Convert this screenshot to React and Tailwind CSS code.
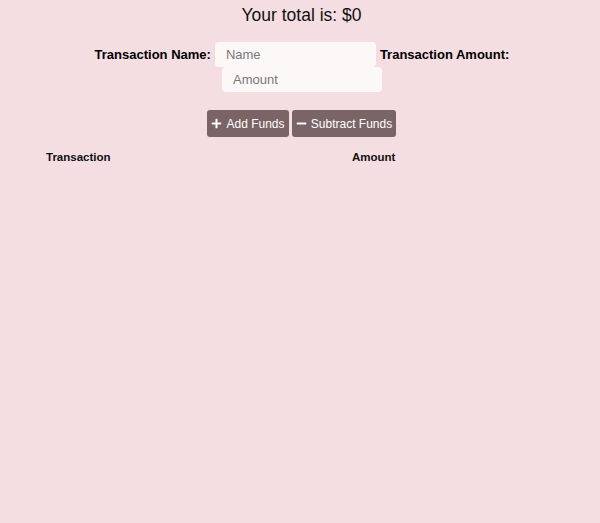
import React from "react";
import { FaPlus, FaMinus } from "react-icons/fa";

const App = () => {
  return (
    <div className="min-h-[523px] w-[600px] bg-[#f4dee1] text-black font-['Liberation_Sans',Arial,sans-serif]">
      <h1 className="pt-[5px] text-center text-[17.5px] leading-[20px] text-[#111]">
        <span className="ml-[3px]">Your total is: $0</span>
      </h1>

      <div className="mt-[17px] ml-[82px] flex w-[440px] flex-wrap items-center justify-center gap-x-[4px]">
        <label className="text-[13px] font-bold">Transaction Name:</label>
        <input
          placeholder="Name"
          className="h-[25px] w-[161px] rounded-[4px] bg-[#fcf8f7] px-[11px] text-[13px] outline-none placeholder:text-[#777]"
        />
        <label className="text-[13px] font-bold">Transaction Amount:</label>
        <input
          placeholder="Amount"
          className="h-[25px] w-[160px] rounded-[4px] bg-[#fcf8f7] px-[11px] text-[13px] outline-none placeholder:text-[#777]"
        />
      </div>

      <div className="mt-[18px] ml-[3px] flex justify-center gap-[3px]">
        <button className="flex h-[27px] w-[82px] items-center justify-center gap-[4px] rounded-[3px] bg-[#7a6466] text-[12px] text-white">
          <FaPlus className="text-[11px]" />
          Add Funds
        </button>
        <button className="flex h-[27px] w-[104px] items-center justify-center gap-[4px] rounded-[3px] bg-[#7a6466] text-[12px] text-white">
          <FaMinus className="text-[11px]" />
          Subtract Funds
        </button>
      </div>

      <div className="mt-[12px] ml-[46px] grid grid-cols-[306px_auto] text-[11.5px] font-bold text-[#111]">
        <span>Transaction</span>
        <span>Amount</span>
      </div>
    </div>
  );
};

export default App;
